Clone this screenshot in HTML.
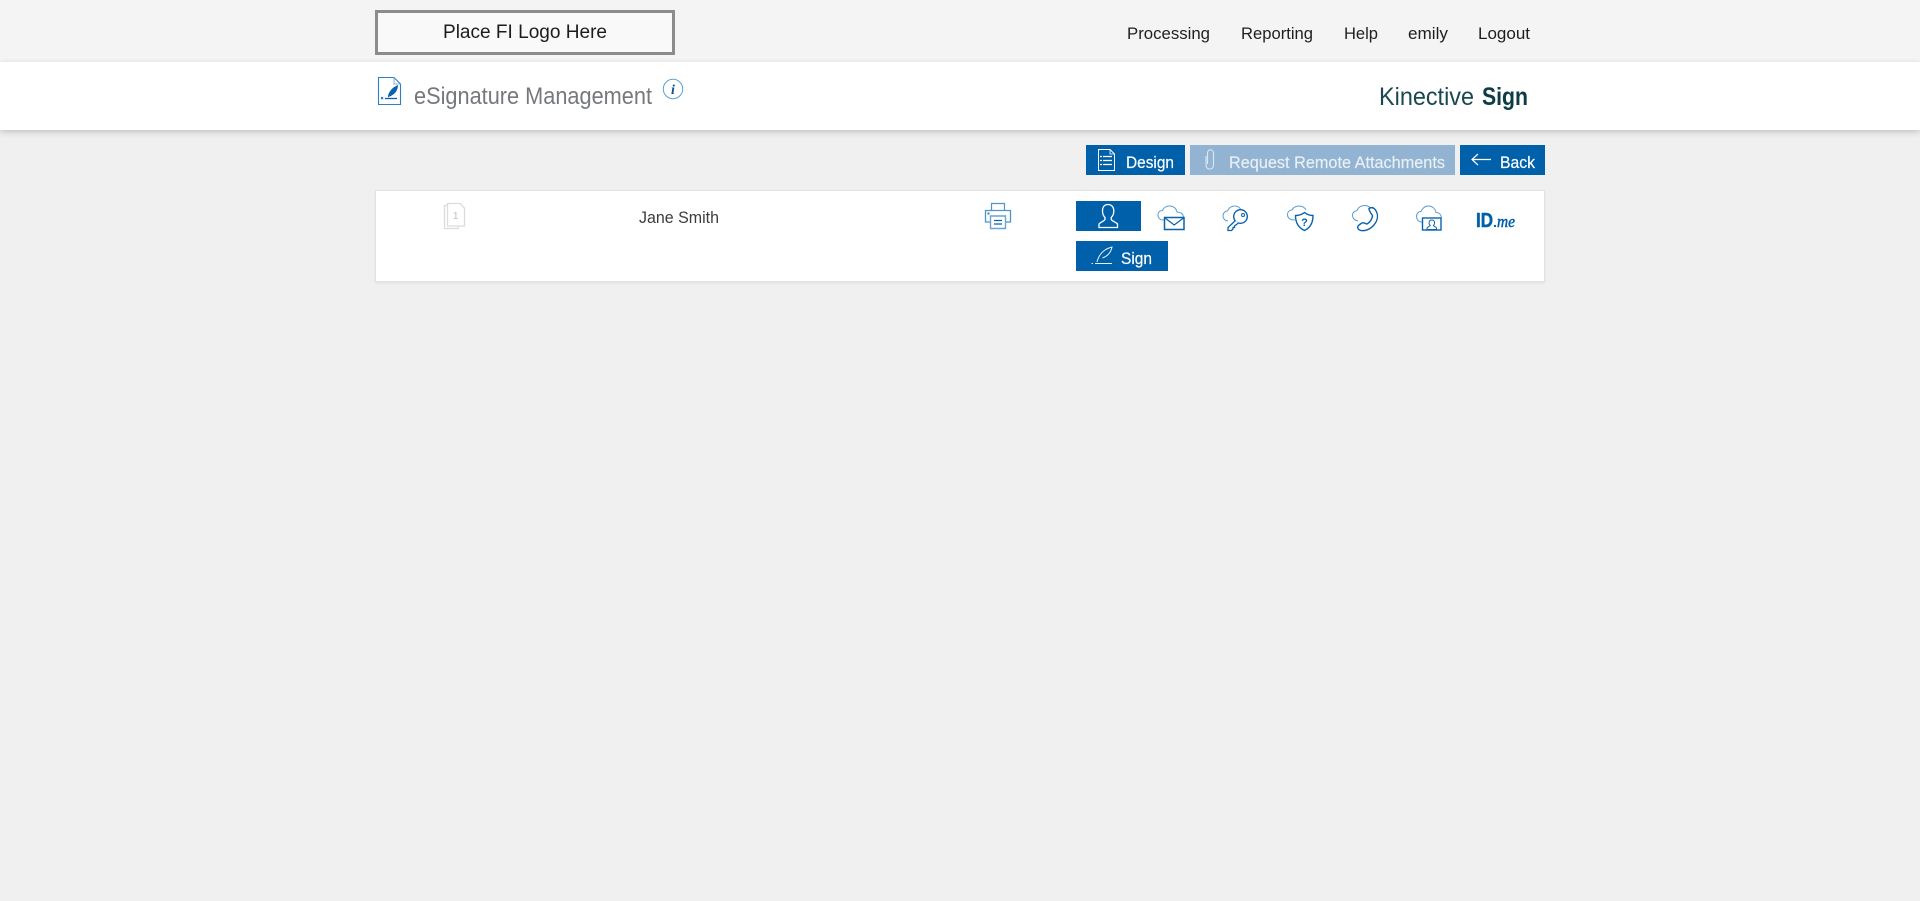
<!DOCTYPE html>
<html lang="en">
<head>
<meta charset="utf-8">
<title>eSignature Management</title>
<style>
html,body{margin:0;padding:0;width:1920px;height:901px;overflow:hidden;background:#f0f0f0;font-family:"Liberation Sans",sans-serif}
#top{position:absolute;left:0;top:0;width:1920px;height:62px;background:#f4f4f4}
#sub{position:absolute;left:0;top:62px;width:1920px;height:68px;background:#fff;box-shadow:0 2px 6px rgba(0,0,0,.2)}
#card{position:absolute;left:375px;top:190px;width:1168px;height:90px;background:#fff;border:1px solid #e2e2e2;box-shadow:0 1px 2px rgba(0,0,0,.08)}
svg{position:absolute;left:0;top:0}
text{font-family:"Liberation Sans",sans-serif}
</style>
</head>
<body>
<div id="top"></div>
<div id="sub"></div>
<div id="card"></div>
<svg width="1920" height="901" viewBox="0 0 1920 901" xmlns="http://www.w3.org/2000/svg">
  <!-- logo -->
  <rect x="376.5" y="11.5" width="297" height="42" fill="#f9f9f9" stroke="#8c8c8c" stroke-width="3"/>
  <text x="443" y="38" font-size="19" fill="#1c1c1c" textLength="164" lengthAdjust="spacingAndGlyphs">Place FI Logo Here</text>

  <!-- nav -->
  <g font-size="17" fill="#1f1f1f">
    <text x="1127" y="39" textLength="83" lengthAdjust="spacingAndGlyphs">Processing</text>
    <text x="1241" y="39" textLength="72" lengthAdjust="spacingAndGlyphs">Reporting</text>
    <text x="1344" y="39" textLength="34" lengthAdjust="spacingAndGlyphs">Help</text>
    <text x="1408" y="39" textLength="40" lengthAdjust="spacingAndGlyphs">emily</text>
    <text x="1478" y="39" textLength="52" lengthAdjust="spacingAndGlyphs">Logout</text>
  </g>

  <!-- doc icon -->
  <path d="M378.5 77.5H394L400.5 84V104.5H378.5Z" fill="none" stroke="#2f7fc4" stroke-width="1.1"/>
  <path d="M394 77.5V84H400.5" fill="none" stroke="#7fb2dc" stroke-width="1"/>
  <path d="M388 96C389 91 393 87 398 85C398 91 394 95 389.5 96.5L388 97.5Z" fill="#0a62ad"/>
  <path d="M385 98.5H397" stroke="#0a62ad" stroke-width="1.3"/>
  <path d="M381 97l2.2 2.2m0-2.2l-2.2 2.2" stroke="#0a62ad" stroke-width="0.8"/>

  <!-- title -->
  <text x="414" y="104" font-size="24" fill="#75787c" textLength="238" lengthAdjust="spacingAndGlyphs">eSignature Management</text>
  <circle cx="673" cy="89" r="9.7" fill="#fff" stroke="#5aa0d2" stroke-width="1"/>
  <text x="673" y="94" font-size="14" font-weight="bold" font-style="italic" fill="#0d4f8c" text-anchor="middle" style="font-family:'Liberation Serif',serif">i</text>

  <!-- brand -->
  <text x="1379" y="105" font-size="25" fill="#1a4850" textLength="95" lengthAdjust="spacingAndGlyphs">Kinective</text>
  <text x="1482" y="105" font-size="25" font-weight="bold" fill="#0d3c44" textLength="46" lengthAdjust="spacingAndGlyphs">Sign</text>

  <!-- toolbar buttons -->
  <rect x="1086" y="145" width="99" height="30" fill="#0060a9"/>
  <rect x="1190" y="145" width="265" height="30" fill="#92b4d2"/>
  <rect x="1460" y="145" width="85" height="30" fill="#0060a9"/>

  <!-- design icon -->
  <g fill="none" stroke="#fff" stroke-width="1">
    <path d="M1098.5 149.5H1110L1114.5 154V170.5H1098.5Z"/>
    <path d="M1110 149.5V154H1114.5" stroke-width="0.8"/>
    <path d="M1103 156.5H1112M1103 160.5H1112M1103 164.5H1112" stroke-width="1.3"/>
    <path d="M1100 156.5H1102M1100 160.5H1102M1100 164.5H1102" stroke-width="1.3"/>
  </g>
  <text x="1126" y="168" font-size="17" fill="#fff" stroke="#fff" stroke-width=".2" textLength="48" lengthAdjust="spacingAndGlyphs">Design</text>

  <!-- paperclip -->
  <path d="M1206 156V165C1206 170.5 1213.5 170.5 1213.5 165V153.5C1213.5 148.5 1207.5 148.5 1207.5 153.5V164" fill="none" stroke="#dce7f1" stroke-width="1.1"/>
  <text x="1229" y="168" font-size="17" fill="#e9f0f6" stroke="#e9f0f6" stroke-width=".15" textLength="216" lengthAdjust="spacingAndGlyphs">Request Remote Attachments</text>

  <!-- back -->
  <path d="M1491 159.5H1472M1478 154L1472 159.5L1478 165" fill="none" stroke="#fff" stroke-width="1.2"/>
  <text x="1500" y="168" font-size="17" fill="#fff" stroke="#fff" stroke-width=".2" textLength="35" lengthAdjust="spacingAndGlyphs">Back</text>

  <!-- pages icon -->
  <g fill="#fff" stroke="#dcdcdc" stroke-width="1.3">
    <path d="M444.5 205.5H458V228.5H444.5Z"/>
    <path d="M447.5 203.5H460L464.5 208V226H447.5Z"/>
  </g>
  <text x="455.5" y="219" font-size="10" font-weight="bold" fill="#d0d0d0" text-anchor="middle">1</text>

  <text x="639" y="223" font-size="17" fill="#3c3c3c" textLength="80" lengthAdjust="spacingAndGlyphs">Jane Smith</text>

  <!-- printer -->
  <g fill="none">
    <path d="M991.5 211V203.5H1004.5V211" stroke="#4f94cb" stroke-width="1.2"/>
    <path d="M990 222H985.5V210.5H1010.5V222H1006" stroke="#4f94cb" stroke-width="1.3"/>
    <path d="M990.5 216H1005.5V228.5H990.5Z" stroke="#6aa4d4" stroke-width="1.4" fill="#fff"/>
    <path d="M994 220.5H1002M994 224H1002" stroke="#0a62ad" stroke-width="1.3"/>
    <rect x="987.5" y="212.5" width="2" height="2" fill="#2f7fc4"/>
  </g>

  <!-- active person button -->
  <rect x="1076" y="201" width="65" height="30" fill="#0060a9"/>
  <path d="M1108 204.5C1103.8 204.5 1102.5 207.8 1102.5 211C1102.5 214 1103.8 216.3 1105 217.5V219.5C1103.5 221.5 1100 222.5 1099 224V227.5H1117.5V224C1116.5 222.5 1112.5 221.5 1111.2 219.5V217.5C1112.5 216.3 1113.8 214 1113.8 211C1113.8 207.8 1112.2 204.5 1108 204.5Z" fill="none" stroke="#fff" stroke-width="1.3"/>

  <!-- sign button -->
  <rect x="1076" y="241" width="92" height="30" fill="#0060a9"/>
  <path d="M1097 262C1099 254 1104 249 1112 247C1111 252 1108 256 1102.5 258" fill="none" stroke="#e8f0f7" stroke-width="1"/>
  <path d="M1095 263.5H1112" stroke="#e8f0f7" stroke-width="1"/>
  <path d="M1091.5 263.5H1093" stroke="#e8f0f7" stroke-width="1"/>
  <text x="1121" y="264" font-size="17" fill="#fff" stroke="#fff" stroke-width=".2" textLength="31" lengthAdjust="spacingAndGlyphs">Sign</text>

  <!-- mail cloud -->
  <path d="M1164 220H1163C1159 220 1158 217 1158 215C1158 212 1160 210.5 1162.5 210.5C1163.5 207.5 1166.5 206 1169.5 206C1174 206 1176.5 209 1177 212C1180 212 1183 213.5 1183.5 217" fill="none" stroke="#5a9bd0" stroke-width="1"/>
  <rect x="1164.5" y="217.5" width="19.5" height="12" fill="#fff" stroke="#0a62ad" stroke-width="1.5"/>
  <path d="M1165 218L1174.2 225L1183.5 218" fill="none" stroke="#0a62ad" stroke-width="1.2"/>

  <!-- key cloud -->
  <path d="M1228 221C1225 221 1223 218.5 1223 216C1223 213 1225 211 1227.5 211C1228.5 208 1231.5 206 1234.5 206C1237.5 206 1240 207.5 1241 210" fill="none" stroke="#5a9bd0" stroke-width="1"/>
  <circle cx="1240.5" cy="216.5" r="6.8" fill="#fff" stroke="#0a62ad" stroke-width="1.4"/>
  <circle cx="1243" cy="215" r="1.5" fill="none" stroke="#0a62ad" stroke-width="1"/>
  <path d="M1235.5 220.5L1228 227.5V230.5H1231.5L1233 229V227.5H1234.5V226L1238.5 223" fill="#fff" stroke="#0a62ad" stroke-width="1.3"/>

  <!-- shield cloud -->
  <path d="M1295 220C1290 220 1287.5 218 1287.5 214.5C1287.5 212 1289.5 210 1292 210C1293 207.5 1296 206 1299 206C1302 206 1305 207.5 1306 210" fill="none" stroke="#5a9bd0" stroke-width="1"/>
  <path d="M1304.5 212.5C1307 214.5 1310 215.5 1313 215.5C1313 222 1311 227.5 1304.5 230.5C1298 227.5 1295.5 222 1295.5 215.5C1299 215.5 1302 214.5 1304.5 212.5Z" fill="#fff" stroke="#0a62ad" stroke-width="1.4"/>
  <text x="1304.5" y="226" font-size="11" font-weight="bold" fill="#0a62ad" text-anchor="middle">?</text>

  <!-- phone cloud -->
  <path d="M1358 221C1354.5 220.5 1352.5 218 1352.5 215.5C1352.5 212.5 1354.5 211 1357 210.5C1358 207.5 1361 205.5 1364.5 205.5C1367 205.5 1369 206.5 1370.5 208" fill="none" stroke="#5a9bd0" stroke-width="1"/>
  <path d="M1369 208.5C1372 206.5 1374 208 1375.5 210C1378.5 214.5 1378 220 1374 225C1370 229.5 1364 232 1359.5 230C1357.5 229 1357 226.5 1359 225L1362 223C1364 222 1365.5 224 1367 224C1370 222.5 1372 219 1372.5 216C1372.5 214.5 1370.5 213.5 1370 211.5C1369.5 210.5 1368.5 209 1369 208.5Z" fill="#fff" stroke="#0a62ad" stroke-width="1.4"/>

  <!-- video cloud -->
  <path d="M1422 222H1421C1418 221.5 1416.5 219 1416.5 216.5C1416.5 213.5 1418.5 211.5 1421 211.5C1422 208.5 1425 206 1428.5 206C1432.5 206 1435.5 209 1436 212.5C1439 212.5 1441 214.5 1441.5 217.5" fill="none" stroke="#5a9bd0" stroke-width="1"/>
  <rect x="1422.5" y="218" width="18.5" height="12" fill="#fff" stroke="#0a62ad" stroke-width="1.4"/>
  <path d="M1431.8 220C1429.8 220 1429 221.5 1429 223C1429 224.2 1429.6 225 1430.2 225.6C1429.6 226.5 1427.6 226.8 1427 228V229.5H1436.5V228C1436 226.8 1434 226.5 1433.4 225.6C1434 225 1434.6 224.2 1434.6 223C1434.6 221.5 1433.8 220 1431.8 220Z" fill="none" stroke="#0a62ad" stroke-width="1"/>

  <!-- ID.me -->
  <text x="1476" y="227" font-size="20" font-weight="bold" fill="#0060a9" stroke="#0060a9" stroke-width=".5" textLength="17" lengthAdjust="spacingAndGlyphs">ID</text>
  <text x="1493" y="227" font-size="14" font-weight="bold" fill="#0060a9">.</text>
  <text x="1497" y="227" font-size="17" font-style="italic" fill="#0060a9" stroke="#0060a9" stroke-width=".5" textLength="18" lengthAdjust="spacingAndGlyphs" style="font-family:'Liberation Serif',serif">me</text>
</svg>
</body>
</html>
